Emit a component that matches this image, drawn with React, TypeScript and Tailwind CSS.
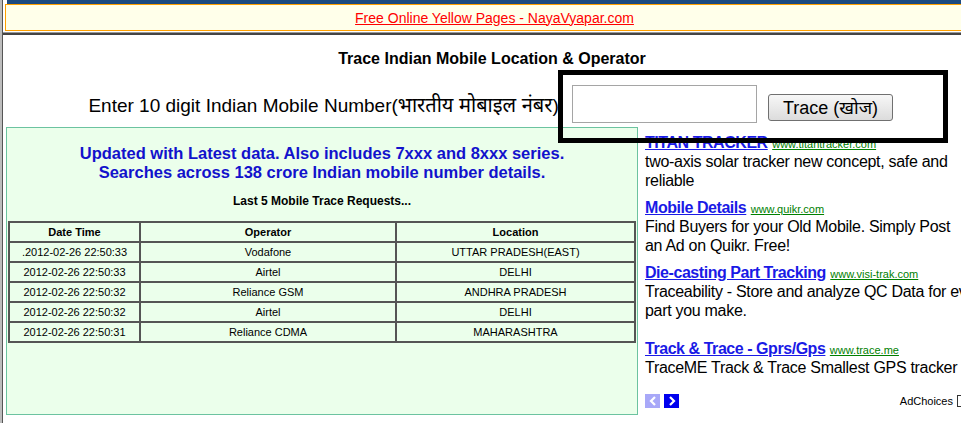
import React from "react";

const rows = [
  { time: ".2012-02-26 22:50:33", op: "Vodafone", loc: "UTTAR PRADESH(EAST)" },
  { time: "2012-02-26 22:50:33", op: "Airtel", loc: "DELHI" },
  { time: "2012-02-26 22:50:32", op: "Reliance GSM", loc: "ANDHRA PRADESH" },
  { time: "2012-02-26 22:50:32", op: "Airtel", loc: "DELHI" },
  { time: "2012-02-26 22:50:31", op: "Reliance CDMA", loc: "MAHARASHTRA" },
];

const ads = [
  {
    title: "TITAN TRACKER",
    url: "www.titantracker.com",
    lines: ["two-axis solar tracker new concept, safe and", "reliable"],
    gap: "mt-0",
  },
  {
    title: "Mobile Details",
    url: "www.quikr.com",
    lines: ["Find Buyers for your Old Mobile. Simply Post", "an Ad on Quikr. Free!"],
    gap: "mt-[8px]",
  },
  {
    title: "Die-casting Part Tracking",
    url: "www.visi-trak.com",
    lines: ["Traceability - Store and analyze QC Data for every", "part you make."],
    gap: "mt-[8px]",
  },
  {
    title: "Track & Trace - Gprs/Gps",
    url: "www.trace.me",
    lines: ["TraceME Track & Trace Smallest GPS tracker"],
    gap: "mt-[19px]",
  },
];

const cell = "border-2 border-[#555] h-[20px] p-0 text-center";

export default function App() {
  return (
    <div
      className="w-[961px] h-[423px] overflow-hidden bg-white relative"
      style={{ fontFamily: '"Liberation Sans", Arial, "Noto Sans", sans-serif' }}
    >
      <div className="w-[984px] h-[423px] flex border-l-2 border-[#bdbdbd]">
        <div className="w-px h-full bg-[#555]" />
        <div className="flex-1 flex flex-col">
          {/* header strip */}
          <div className="h-[4px] ml-[4px] bg-[#1c4a80]" />
          <div className="ml-[2px] h-[27px] border border-[#ffa000] bg-[#ffffea] flex items-center justify-center">
            <a href="#" className="text-[14px] text-[#ff0000] underline leading-none">
              Free Online Yellow Pages - NayaVyapar.com
            </a>
          </div>
          <div className="mt-[1px] h-[3px] border-t border-[#9a9a9a] bg-[#444]" />

          <div className="relative">
            <h1 className="mt-[15px] text-center text-[16px] font-bold leading-[18px] text-black -ml-[3px]">
              Trace Indian Mobile Location &amp; Operator
            </h1>

            <div className="mt-[17px] flex items-start">
              <div className="w-[561px] text-right text-[19px] leading-[20px] pt-[10px] text-black whitespace-nowrap">
                Enter 10 digit Indian Mobile Number(<span className="text-[20px]">भारतीय मोबाइल नंबर</span>):
              </div>
              <input
                className="ml-[8px] w-[185px] h-[38px] border border-[#a5a5a5] bg-white outline-none"
                type="text"
              />
              <button className="ml-[11px] mt-[9px] w-[125px] h-[27px] rounded-[3px] border border-[#707070] bg-gradient-to-b from-[#f7f7f7] to-[#dcdcdc] text-[18px] leading-none text-black">
                Trace (खोज)
              </button>
            </div>

            <div className="mt-[4px] flex items-start">
              {/* left green panel */}
              <div className="ml-[3px] w-[632px] h-[288px] border border-[#6cc3a0] bg-[#ebffeb] pt-[16px]">
                <p className="text-center text-[16.5px] font-bold leading-[19px] text-[#1212cc]">
                  Updated with Latest data. Also includes 7xxx and 8xxx series.
                  <br />
                  Searches across 138 crore Indian mobile number details.
                </p>
                <p className="mt-[12px] text-center text-[12px] font-bold leading-[14px] text-black">
                  Last 5 Mobile Trace Requests...
                </p>
                <table className="mt-[13px] ml-[1px] w-[628px] border-collapse text-[11px] text-black">
                  <thead>
                    <tr>
                      <th className={`${cell} w-[131px] font-bold`}>Date Time</th>
                      <th className={`${cell} w-[256px] font-bold`}>Operator</th>
                      <th className={`${cell} font-bold`}>Location</th>
                    </tr>
                  </thead>
                  <tbody>
                    {rows.map((r, i) => (
                      <tr key={i}>
                        <td className={cell}>{r.time}</td>
                        <td className={cell}>{r.op}</td>
                        <td className={cell}>{r.loc}</td>
                      </tr>
                    ))}
                  </tbody>
                </table>
              </div>

              {/* ads column */}
              <div className="ml-[7px] mt-[6px] w-[335px] flex flex-col">
                {ads.map((ad) => (
                  <div key={ad.title} className={ad.gap}>
                    <div className="h-[19px] leading-[19px] whitespace-nowrap">
                      <a href="#" className="text-[16px] font-bold tracking-[-0.45px] text-[#1a1ae6] underline">
                        {ad.title}
                      </a>{" "}
                      <a href="#" className="text-[11px] text-[#008000] underline">
                        {ad.url}
                      </a>
                    </div>
                    {ad.lines.map((l) => (
                      <p key={l} className="text-[16px] leading-[19px] tracking-[-0.3px] text-black whitespace-nowrap">
                        {l}
                      </p>
                    ))}
                  </div>
                ))}
                <div className="mt-[16px] flex items-center w-[322px]">
                  <span className="w-[15px] h-[14px] bg-[#a8a8f8] flex items-center justify-center">
                    <svg width="8" height="10" viewBox="0 0 8 10">
                      <path d="M6 1 L2 5 L6 9" stroke="white" strokeWidth="2.2" fill="none" />
                    </svg>
                  </span>
                  <span className="ml-[4px] w-[15px] h-[14px] bg-[#0000ee] flex items-center justify-center">
                    <svg width="8" height="10" viewBox="0 0 8 10">
                      <path d="M2 1 L6 5 L2 9" stroke="white" strokeWidth="2.2" fill="none" />
                    </svg>
                  </span>
                  <span className="ml-auto text-[11px] text-black">AdChoices</span>
                  <span className="ml-[4px] w-[10px] h-[12px] border border-[#333]" />
                </div>
              </div>
            </div>
          </div>
        </div>
      </div>

      {/* highlight box drawn over the page */}
      <div className="absolute left-[558px] top-[70px] w-[390px] h-[73px] border-[5px] border-black pointer-events-none" />
    </div>
  );
}
